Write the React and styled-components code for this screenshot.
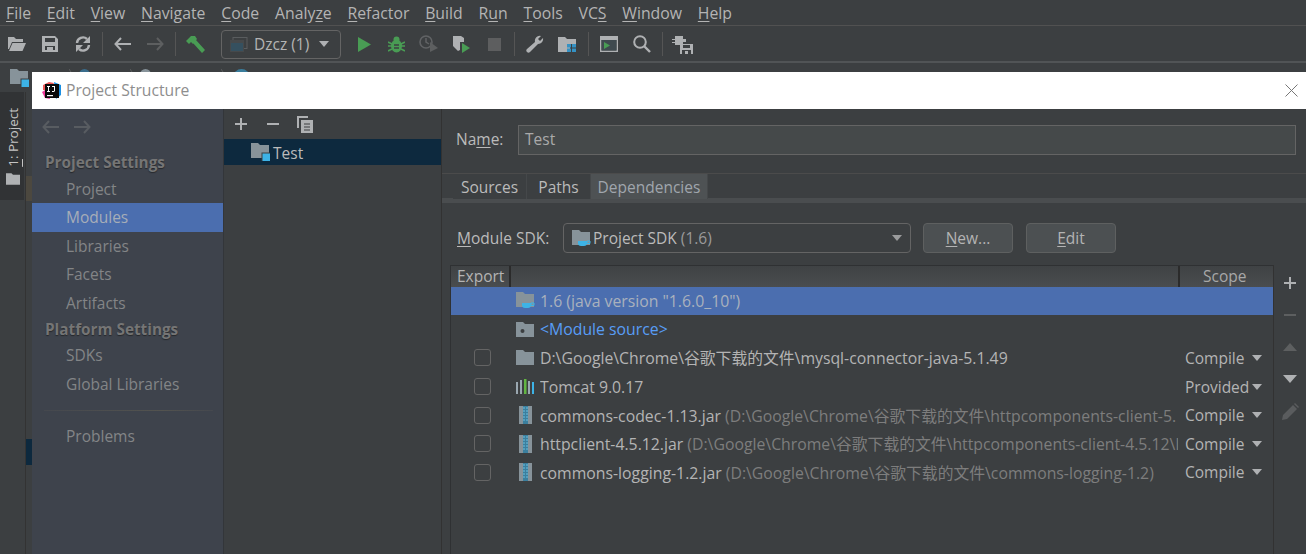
import React from "react";
import styled, { createGlobalStyle } from "styled-components";

const Global = createGlobalStyle`
  html, body { margin: 0; padding: 0; background: #3c3f41; }
  body { font-family: "Open Sans", "Noto Sans CJK SC", sans-serif; font-size: 15px; }
  * { box-sizing: border-box; }
`;

const Page = styled.div`
  position: relative; width: 1306px; height: 554px; overflow: hidden;
  background: #3c3f41; color: #bbbbbb; font-size: 15.5px;
  font-family: "Open Sans", "Noto Sans CJK SC", sans-serif;
`;
const MenuBar = styled.div`
  display: flex; height: 26px; align-items: center; padding-left: 6px; gap: 15.8px;
  border-bottom: 1px solid #515151; color: #b4b4b4; font-size: 15.8px;
`;
const Key = styled.span`text-decoration: underline; text-underline-offset: 2px; text-decoration-thickness: 1px;`;
const ToolBar = styled.div`
  display: flex; height: 37px; align-items: center; border-bottom: 2px solid #515456; padding-top: 1px;
`;
const Slot = styled.div`
  width: ${p => p.$w || 33}px; height: 30px; display: flex; align-items: center; justify-content: center; flex: none;
`;
const Sep = styled.div`
  width: 1px; height: 24px; background: #555; flex: none;
  margin: 0 3px 0 ${p => p.$ml ?? 3}px;
`;
const RunCombo = styled.div`
  width: 120px; height: 29px; margin: 0 7px 0 9px; border: 1px solid #646464; border-radius: 4px; flex: none;
  display: flex; align-items: center; gap: 6px; padding-left: 8px; color: #b4b4b4;
`;
const Arrow = styled.span`
  width: 0; height: 0; flex: none; margin-left: ${p => p.$ml || 0}px;
  border-left: 5.5px solid transparent; border-right: 5.5px solid transparent;
  border-top: 6px solid ${p => p.$c || "#afb1b3"};
`;
const NavBar = styled.div`
  display: flex; height: 29px; padding: 6px 0 0 10px; align-items: flex-start;
`;
const Crumb = styled.div`margin-left: ${p => p.$ml}px; flex: none; display: flex;`;
const Workspace = styled.div`display: flex; height: 462px;`;
const Strip = styled.div`
  width: 24px; height: 462px; flex: none;
`;
const StripTab = styled.div`
  height: 108px; background: #313335; display: flex; flex-direction: column; align-items: center; gap: 6px; padding: 16px 0 0 2px;
`;
const StripLabel = styled.div`
  writing-mode: vertical-rl; transform: rotate(180deg); font-size: 13.5px; color: #c4c4c4; line-height: 18px; white-space: nowrap;
`;
const Gutter = styled.div`
  width: 7px; margin-left: 1px; display: flex; flex-direction: column; flex: none; border-left: 1px solid #333;
`;
const GutterBand = styled.div`height: ${p => p.$h}px; background: ${p => p.$c};`;

const Dialog = styled.div`
  position: absolute; left: 32px; top: 72px; width: 1274px; height: 482px; display: flex; flex-direction: column;
  background: #3c3f41;
`;
const TitleBar = styled.div`
  height: 37px; background: #fff; display: flex; align-items: center; padding-left: 10px; gap: 4px; color: #8e8e8e; flex: none; font-size: 15.7px;
`;
const TitleText = styled.div`flex: 1; position: relative; top: -1px;`;
const CloseBox = styled.div`width: 30px; display: flex; justify-content: center;`;
const DialogBody = styled.div`display: flex; flex: 1; min-height: 0;`;
const Sidebar = styled.div`
  width: 192px; background: #3e434c; flex: none; padding-top: 5px; color: #838587; border-right: 1px solid #33363a;
`;
const NavArrows = styled.div`display: flex; gap: 15px; padding-left: 10px; height: 25px; align-items: center;`;
const GroupTitle = styled.div`
  height: ${p => p.$h || 25}px; margin-top: ${p => p.$mt || 0}px; padding-left: 13px; display: flex; align-items: center; font-weight: 700; color: #757575; text-shadow: 0 1px 1px #26282c; font-size: 15.3px;
`;
const SideItem = styled.div`
  height: 28.5px; padding-left: 34px; display: flex; align-items: center;
  ${p => p.$active && "background: #4b6eaf; color: #a6adb8;"}
`;
const SideRule = styled.div`height: 1px; margin: 11.500px 10px 11px 12px; background: linear-gradient(90deg, #45484e, #53534f 70%, #45484e);`;
const Middle = styled.div`width: 218px; flex: none; border-right: 1px solid #323232;`;
const MiniBar = styled.div`height: 30px; display: flex; align-items: center; padding-left: 1px;`;
const MiniBtn = styled.div`width: 32px; display: flex; justify-content: center;`;
const TreeRow = styled.div`
  height: 26px; background: #0d293e; display: flex; align-items: center; padding-left: 27px; gap: 3px; color: #bbb;
`;
const TreeText = styled.span`position: relative; top: 1px;`;
const Right = styled.div`flex: 1; min-width: 0; padding-top: 16px; display: flex; flex-direction: column;`;
const NameRow = styled.div`display: flex; align-items: center; height: 30px; padding: 0 10px 0 14px;`;
const NameLabel = styled.span`width: 62px; flex: none; position: relative; top: -1px;`;
const NameInput = styled.div`
  flex: 1; height: 30px; background: #45494a; border: 1px solid #646464; padding: 0 0 2px 6px; display: flex; align-items: center; color: #aaa;
`;
const Tabs = styled.div`
  margin-top: 18px; height: 30px; border-top: 1px solid #4b4b4b; border-bottom: 5px solid #4a4d4f; display: flex; padding-left: 11px;
`;
const Tab = styled.div`
  width: ${p => p.$w}px; display: flex; align-items: center; justify-content: center; background: ${p => p.$on ? "#4e5254" : "#3c3f41"}; color: ${p => p.$on ? "#a0a6ad" : "#bbb"};
  border-right: 1px solid #45484a; height: 25px; flex: none;
`;
const SdkRow = styled.div`display: flex; align-items: center; height: 30px; margin-top: 20px; padding-left: 15px;`;
const SdkLabel = styled.div`width: 106px; flex: none; white-space: nowrap;`;
const SdkCombo = styled.div`
  width: 348px; height: 30px; border: 1px solid #646464; border-radius: 4px; display: flex; align-items: center; padding: 0 8px 0 8px; gap: 2px; flex: none;
`;
const Dim = styled.span`color: ${p => p.$c || "#8c8c8c"};`;
const Grow = styled.div`flex: 1;`;
const PushButton = styled.div`
  width: 90px; height: 30px; margin-left: ${p => p.$ml}px; border: 1px solid #5e6060; border-radius: 4px; background: #4c5052; display: flex; align-items: center; justify-content: center; color: #b4b4b4; flex: none;
`;
const TableWrap = styled.div`display: flex; flex: 1; margin: 12px 0 0 8px; min-height: 0;`;
const Table = styled.div`flex: 1; min-width: 0; border-left: 1px solid #2f3133;`;
const THead = styled.div`
  height: 21.500px; display: flex; background: linear-gradient(#3f4244, #4a4d4f); border-top: 1px solid #2f3133; color: #b4b4b4; line-height: 21px;
`;
const ThExport = styled.div`width: 60px; padding-left: 6px; border-right: 2px solid #2b2b2b;`;
const ThMid = styled.div`flex: 1;`;
const ThScope = styled.div`width: 95px; border-left: 2px solid #2b2b2b; padding-left: 23px; color: #a8a8a8;`;
const Row = styled.div`
  height: 28.6px; display: flex; align-items: center; background: ${p => p.$sel ? "#4b6eaf" : "transparent"};
`;
const CheckCell = styled.div`width: 60px; display: flex; justify-content: center; flex: none; padding-left: 2px;`;
const Check = styled.div`width: 17px; height: 17px; border: 1px solid #646464; border-radius: 3px; background: #3c3f41;`;
const IconCell = styled.div`width: 29px; flex: none; padding-left: 5px; display: flex;`;
const RowName = styled.div`
  flex: 1; min-width: 0; overflow: hidden; white-space: nowrap; font-size: 15.8px; color: ${p => p.$c || "#b4b4b4"};
`;
const ScopeCell = styled.div`
  width: 95px; flex: none; display: flex; align-items: center; padding-left: 7px; color: #b4b4b4; justify-content: space-between; padding-right: 11px;
`;
const SideTools = styled.div`
  width: 33px; flex: none; border-left: 1px solid #323232; display: flex; flex-direction: column; padding-top: 2px;
`;
const SideBtn = styled.div`height: 32px; flex: none; display: flex; align-items: center; justify-content: center;`;

const G = "#afb1b3";
const Svg = ({ w = 16, h = 16, children }) => <svg width={w} height={h} viewBox={`0 0 ${w} ${h}`}>{children}</svg>;

const OpenFolder = () => <Svg w={18} h={14}><path d="M0 0h6l2 2h7v3H4L1 12H0z M4.500 6H18l-3.500 8H1z" fill={G} /></Svg>;
const SaveIcon = () => <Svg><path d="M0 0h13l3 3v13H0z M3 2v4h10V2z M3 10v4h10v-4z" fill={G} fillRule="evenodd" /><rect x="5" y="11" width="6" height="3" fill={G} /></Svg>;
const SyncIcon = () => <Svg><path d="M2 7a6 6 0 0 1 10-4M14 9a6 6 0 0 1-10 4" fill="none" stroke={G} strokeWidth="2.4" /><path d="M15 0v7H8zM1 16V9h7z" fill={G} /></Svg>;
const ArrowIcon = ({ dir, c = G }) => <Svg w={17} h={14}><g transform={dir === "r" ? "translate(17 0) scale(-1 1)" : ""}><path d="M7 1L1.5 7 7 13M2 7h15" fill="none" stroke={c} strokeWidth="2" /></g></Svg>;
const Hammer = () => <Svg w={19} h={17}><path d="M0 5L5 0h4l2 3-4 5-2-2-2 2z M7 7l3-3 9 10-3 3z" fill="#499c54" /></Svg>;
const WinIcon = () => <Svg w={18} h={15}><rect x="3" y="0.5" width="14" height="11" fill="none" stroke="#5a5d5f" /><rect x="0" y="3" width="14" height="12" fill="#46494b" /><rect x="1" y="6" width="12" height="8" fill="#35505f" /></Svg>;
const RunIcon = () => <Svg w={13} h={15}><path d="M0 0l13 7.500L0 15z" fill="#499c54" /></Svg>;
const BugIcon = () => <Svg w={17} h={17}><ellipse cx="8.500" cy="10" rx="5.500" ry="6.500" fill="#499c54" /><circle cx="8.500" cy="3.500" r="3" fill="#499c54" /><path d="M0 6l4 2M17 6l-4 2M0 10h4M17 10h-4M0 15l4-2M17 15l-4-2" stroke="#499c54" strokeWidth="1.600" /><path d="M6 9h5M6 12h5" stroke="#3c3f41" strokeWidth="1.500" /></Svg>;
const CoverIcon = () => <Svg w={20} h={18}><circle cx="7" cy="7" r="6" fill="none" stroke="#616365" strokeWidth="1.600" /><path d="M7 3v4l3 2" fill="none" stroke="#616365" strokeWidth="1.500" /><path d="M11 7l8 6-8 4z" fill="#5d5f60" /></Svg>;
const ProfileIcon = () => <Svg w={19} h={18}><path d="M1 1h8l3 2v4H8v8l-2 1-5-5z" fill={G} /><path d="M10 8l8 5-8 5z" fill="#499c54" /></Svg>;
const StopIcon = () => <Svg w={13} h={13}><rect width="13" height="13" fill="#5d5e5f" /></Svg>;
const Wrench = () => <Svg w={18} h={18}><path d="M17 3l-3 3-2-2 3-3a5 5 0 0 0-6 6L1 14a2 2 0 0 0 3 3l8-8a5 5 0 0 0 5-6z" fill={G} /></Svg>;
const StructIcon = () => <Svg w={19} h={16}><path d="M0 1h7l2 2h9v5h-6v8H0z" fill={G} /><rect x="9" y="8" width="4" height="3.500" fill="#3592c4" /><rect x="14" y="8" width="4" height="3.500" fill="#3592c4" /><rect x="9" y="12.500" width="4" height="3.500" fill="#3592c4" /><rect x="14" y="12.500" width="4" height="3.500" fill="#3592c4" /></Svg>;
const TermIcon = () => <Svg w={18} h={16}><path d="M0 0h18v16H0z M1.500 4v10.500h15V4z" fill={G} fillRule="evenodd" /><rect x="1.500" y="4" width="15" height="10.500" fill="#3f4a4f" /><path d="M4 6l6 3.500L4 13z" fill="#499c54" /></Svg>;
const SearchIcon = () => <Svg w={18} h={18}><circle cx="7" cy="7" r="5.800" fill="none" stroke={G} strokeWidth="2" /><path d="M11 11l6 6" stroke={G} strokeWidth="2.400" /></Svg>;
const SdkIcon = () => <Svg w={21} h={19}><path d="M3 1h8v3h3v3h-3v3H3V8H0V7h3V5H0V4h3z" fill={G} /><path d="M8 9h13v10H8z" fill={G} /><rect x="11" y="10" width="7" height="3" fill="#3c3f41" /><rect x="10" y="15" width="9" height="4" fill="#3c3f41" /><rect x="13" y="16" width="3" height="3" fill={G} /></Svg>;

const Folder = ({ w = 18, h = 15, c = "#87939a" }) => <svg width={w} height={h} viewBox="0 0 18 15"><path d="M0 0h7l2 2h9v13H0z" fill={c} /></svg>;
const ModuleFolder = () => <Svg w={19} h={18}><path d="M0 0h7l2 2h9v13H0z" fill="#87939a" /><rect x="10.500" y="9.500" width="8.500" height="8.500" fill="#3c3f41" /><rect x="11.500" y="10.500" width="7.500" height="7.500" fill="#3db3e6" /></Svg>;
const Jdk = () => <Svg w={19} h={17}><path d="M0 0h7l2 2h9v13H0z" fill="#87939a" /><path d="M6 11h9v2a3 3 0 0 1-3 3H9a3 3 0 0 1-3-3z" fill="#3db3e6" /><path d="M15 11h3v2.500h-3z" fill="none" stroke="#3db3e6" /></Svg>;
const SourceFolder = () => <Svg w={18} h={15}><path d="M0 0h7l2 2h9v13H0z" fill="#87939a" /><circle cx="6.500" cy="9" r="2" fill="#3c3f41" /></Svg>;
const TomcatIcon = () => <Svg w={18} h={15}><rect y="3" width="2" height="12" fill="#9aa7b0" /><rect x="4" y="1" width="2" height="14" fill="#9aa7b0" /><rect x="8" y="0" width="2.500" height="15" fill="#62b543" /><rect x="12" y="2" width="2" height="13" fill="#9aa7b0" /><rect x="16" y="3" width="2" height="12" fill="#3db3e6" /></Svg>;
const JarIcon = () => <Svg w={16} h={18}><rect x="3" y="0" width="13" height="18" fill="#87939a" /><rect x="7" y="0" width="5" height="18" fill="#3b7f9e" /><path d="M7 2h5M7 5h5M7 8h5M7 11h5M7 14h5" stroke="#6ec0df" strokeWidth="1" strokeDasharray="2 1" /></Svg>;
const Plus = ({ c = G }) => <Svg w={14} h={14}><path d="M7 1v12M1 7h12" stroke={c} strokeWidth="2" /></Svg>;
const Minus = ({ c = G }) => <Svg w={14} h={14}><path d="M1 7h12" stroke={c} strokeWidth="2" /></Svg>;
const CopyIcon = () => <Svg w={16} h={17}><path d="M0 0h11v2H2v10H0z" fill={G} /><path d="M4 4h12v13H4z" fill={G} /><path d="M7 8h6M7 11h6M7 14h6" stroke="#3c3f41" strokeWidth="1.200" /></Svg>;
const Triangle = ({ up, c }) => <Svg w={14} h={8}><path d={up ? "M0 8L7 0l7 8z" : "M0 0h14L7 8z"} fill={c} /></Svg>;
const Pencil = () => <Svg w={17} h={17}><path d="M0 17l1-5L11 2l4 4L5 16zM12 1l1-1 4 4-1 1z" fill="#5a5c5e" /></Svg>;
const CloseX = () => <Svg w={13} h={13}><path d="M0.500 0.500l12 12M12.500 0.500l-12 12" stroke="#777" strokeWidth="1" /></Svg>;
const Chevron = () => <Svg w={5} h={6}><path d="M0 0l4 6" stroke="#5a5d5f" fill="none" /></Svg>;
const CrumbDot = ({ c, w = 11 }) => <svg width={w} height={w}><circle cx={w / 2} cy={w / 2} r={w / 2} fill={c} /></svg>;
const IjLogo = () => (
  <svg width="20" height="20" viewBox="0 0 20 20">
    <path d="M1 4l6-3 5 1-5 8-6-1z" fill="#f05a5a" />
    <path d="M0 11l5-3 3 10-5-1z" fill="#f0399b" />
    <path d="M12 1l7 3v10l-5 4z" fill="#1a8fe3" />
    <rect x="3" y="3" width="14" height="14" fill="#0a0a0a" />
    <rect x="5" y="14" width="6" height="1.200" fill="#fff" />
    <path d="M5 5h3v1H7v4h1v1H5v-1h1V6H5zM10 5h3v5l-1 1h-2v-1h2V6h-2z" fill="#fff" />
  </svg>
);

const Menu = () => (
  <MenuBar>
    <span><Key>F</Key>ile</span><span><Key>E</Key>dit</span><span><Key>V</Key>iew</span>
    <span><Key>N</Key>avigate</span><span><Key>C</Key>ode</span><span>Analy<Key>z</Key>e</span>
    <span><Key>R</Key>efactor</span><span><Key>B</Key>uild</span><span>R<Key>u</Key>n</span>
    <span><Key>T</Key>ools</span><span>VC<Key>S</Key></span><span><Key>W</Key>indow</span><span><Key>H</Key>elp</span>
  </MenuBar>
);

const deps = [
  { icon: <Folder />, main: "D:\\Google\\Chrome\\谷歌下载的文件\\mysql-connector-java-5.1.49", scope: "Compile" },
  { icon: <TomcatIcon />, main: "Tomcat 9.0.17", scope: "Provided" },
  { icon: <JarIcon />, main: "commons-codec-1.13.jar", dim: "(D:\\Google\\Chrome\\谷歌下载的文件\\httpcomponents-client-5.", scope: "Compile" },
  { icon: <JarIcon />, main: "httpclient-4.5.12.jar", dim: "(D:\\Google\\Chrome\\谷歌下载的文件\\httpcomponents-client-4.5.12\\l", scope: "Compile" },
  { icon: <JarIcon />, main: "commons-logging-1.2.jar", dim: "(D:\\Google\\Chrome\\谷歌下载的文件\\commons-logging-1.2)", scope: "Compile" },
];

export default function App() {
  return (
    <Page>
      <Global />
      <Menu />
      <ToolBar>
        <Slot><OpenFolder /></Slot><Slot><SaveIcon /></Slot><Slot><SyncIcon /></Slot>
        <Sep />
        <Slot><ArrowIcon /></Slot><Slot><ArrowIcon dir="r" c="#5d5f60" /></Slot>
        <Sep />
        <Slot><Hammer /></Slot>
        <RunCombo><WinIcon /><span>Dzcz (1)</span><Arrow $ml={4} /></RunCombo>
        <Slot $w={32.5}><RunIcon /></Slot><Slot $w={32.5}><BugIcon /></Slot><Slot $w={32.5}><CoverIcon /></Slot><Slot $w={32.5}><ProfileIcon /></Slot><Slot $w={32.5}><StopIcon /></Slot>
        <Sep $ml={3.5} />
        <Slot><Wrench /></Slot><Slot><StructIcon /></Slot>
        <Sep $ml={4} />
        <Slot><TermIcon /></Slot><Slot><SearchIcon /></Slot>
        <Sep $ml={4} />
        <Slot><SdkIcon /></Slot>
      </ToolBar>
      <NavBar>
        <ModuleFolder />
        <Crumb $ml={40}><Chevron /></Crumb>
        <Crumb $ml={5}><CrumbDot c="#3a6d8c" /></Crumb>
        <Crumb $ml={40}><Chevron /></Crumb>
        <Crumb $ml={5}><CrumbDot c="#87939a" /></Crumb>
        <Crumb $ml={70}><Chevron /></Crumb>
        <Crumb $ml={7}><CrumbDot c="#3a7d9c" w={17} /></Crumb>
      </NavBar>
      <Workspace>
        <Strip>
          <StripTab>
            <StripLabel><Key>1</Key>: Project</StripLabel>
            <Folder w={14} h={12} c="#afb1b3" />
          </StripTab>
        </Strip>
        <Gutter>
          <GutterBand $h={84} $c="#3c3f41" />
          <GutterBand $h={25} $c="#4c483f" />
          <GutterBand $h={238} $c="#3c3f41" />
          <GutterBand $h={26} $c="#0d293e" />
        </Gutter>
      </Workspace>

      <Dialog>
        <TitleBar>
          <IjLogo />
          <TitleText>Project Structure</TitleText>
          <CloseBox><CloseX /></CloseBox>
        </TitleBar>
        <DialogBody>
          <Sidebar>
            <NavArrows><ArrowIcon c="#585c61" /><ArrowIcon dir="r" c="#585c61" /></NavArrows>
            <GroupTitle $mt={10.5}>Project Settings</GroupTitle>
            <SideItem>Project</SideItem>
            <SideItem $active>Modules</SideItem>
            <SideItem>Libraries</SideItem>
            <SideItem>Facets</SideItem>
            <SideItem>Artifacts</SideItem>
            <GroupTitle $h={24}>Platform Settings</GroupTitle>
            <SideItem>SDKs</SideItem>
            <SideItem>Global Libraries</SideItem>
            <SideRule />
            <SideItem>Problems</SideItem>
          </Sidebar>
          <Middle>
            <MiniBar>
              <MiniBtn><Plus /></MiniBtn><MiniBtn><Minus /></MiniBtn><MiniBtn><CopyIcon /></MiniBtn>
            </MiniBar>
            <TreeRow><ModuleFolder /><TreeText>Test</TreeText></TreeRow>
          </Middle>
          <Right>
            <NameRow>
              <NameLabel>Na<Key>m</Key>e:</NameLabel>
              <NameInput>Test</NameInput>
            </NameRow>
            <Tabs>
              <Tab $w={74}>Sources</Tab><Tab $w={64}>Paths</Tab><Tab $w={117} $on>Dependencies</Tab>
            </Tabs>
            <SdkRow>
              <SdkLabel><Key>M</Key>odule SDK:</SdkLabel>
              <SdkCombo>
                <Jdk /><span>Project SDK <Dim $c="#9a9a9a">(1.6)</Dim></span><Grow /><Arrow $c="#9a9b9c" />
              </SdkCombo>
              <PushButton $ml={12}><span><Key>N</Key>ew...</span></PushButton>
              <PushButton $ml={13}><span><Key>E</Key>dit</span></PushButton>
            </SdkRow>
            <TableWrap>
              <Table>
                <THead><ThExport>Export</ThExport><ThMid /><ThScope>Scope</ThScope></THead>
                <Row $sel><CheckCell /><IconCell><Jdk /></IconCell><RowName $c="#a9b1bd">1.6 (java version "1.6.0_10")</RowName></Row>
                <Row><CheckCell /><IconCell><SourceFolder /></IconCell><RowName $c="#589df6">&lt;Module source&gt;</RowName></Row>
                {deps.map(d => (
                  <Row key={d.main}>
                    <CheckCell><Check /></CheckCell>
                    <IconCell>{d.icon}</IconCell>
                    <RowName>{d.main} {d.dim && <Dim $c="#7d7d7d">{d.dim}</Dim>}</RowName>
                    <ScopeCell><span>{d.scope}</span><Arrow /></ScopeCell>
                  </Row>
                ))}
              </Table>
              <SideTools>
                <SideBtn><Plus /></SideBtn>
                <SideBtn><Minus c="#5d5f60" /></SideBtn>
                <SideBtn><Triangle up c="#5d5f60" /></SideBtn>
                <SideBtn><Triangle c={G} /></SideBtn>
                <SideBtn><Pencil /></SideBtn>
              </SideTools>
            </TableWrap>
          </Right>
        </DialogBody>
      </Dialog>
    </Page>
  );
}
